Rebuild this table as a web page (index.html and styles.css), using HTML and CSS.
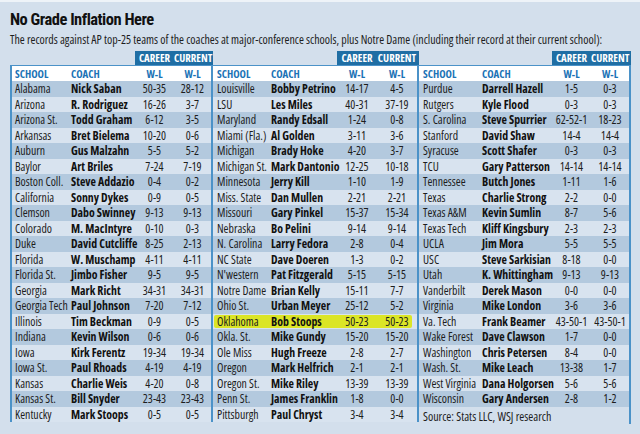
FILE: index.html
```html
<!DOCTYPE html>
<html lang="en">
<head>
<meta charset="utf-8">
<title>No Grade Inflation Here</title>
<link rel="stylesheet" href="styles.css">
</head>
<body>
<div class="page">
  <h1 class="title">No Grade Inflation Here</h1>
  <p class="sub">The records against AP top-25 teams of the coaches at major-conference schools, plus Notre Dame (including their record at their current school):</p>
  <div class="tables">
    <div class="panel p1">
      <div class="bar"><div class="hd"><span class="hc">CAREER</span><span class="hu">CURRENT</span></div></div>
      <div class="box">
        <div class="row head"><span class="s">SCHOOL</span><span class="c">COACH</span><span class="n">W-L</span><span class="n">W-L</span></div>
        <div class="rows">
          <div class="row"><span class="s">Alabama</span><span class="c">Nick Saban</span><span class="n">50-35</span><span class="n">28-12</span></div>
          <div class="row"><span class="s">Arizona</span><span class="c">R. Rodriguez</span><span class="n">16-26</span><span class="n">3-7</span></div>
          <div class="row"><span class="s">Arizona St.</span><span class="c">Todd Graham</span><span class="n">6-12</span><span class="n">3-5</span></div>
          <div class="row"><span class="s">Arkansas</span><span class="c">Bret Bielema</span><span class="n">10-20</span><span class="n">0-6</span></div>
          <div class="row"><span class="s">Auburn</span><span class="c">Gus Malzahn</span><span class="n">5-5</span><span class="n">5-2</span></div>
          <div class="row"><span class="s">Baylor</span><span class="c">Art Briles</span><span class="n">7-24</span><span class="n">7-19</span></div>
          <div class="row"><span class="s">Boston Coll.</span><span class="c">Steve Addazio</span><span class="n">0-4</span><span class="n">0-2</span></div>
          <div class="row"><span class="s">California</span><span class="c">Sonny Dykes</span><span class="n">0-9</span><span class="n">0-5</span></div>
          <div class="row"><span class="s">Clemson</span><span class="c">Dabo Swinney</span><span class="n">9-13</span><span class="n">9-13</span></div>
          <div class="row"><span class="s">Colorado</span><span class="c">M. MacIntyre</span><span class="n">0-10</span><span class="n">0-3</span></div>
          <div class="row"><span class="s">Duke</span><span class="c">David Cutcliffe</span><span class="n">8-25</span><span class="n">2-13</span></div>
          <div class="row"><span class="s">Florida</span><span class="c">W. Muschamp</span><span class="n">4-11</span><span class="n">4-11</span></div>
          <div class="row"><span class="s">Florida St.</span><span class="c">Jimbo Fisher</span><span class="n">9-5</span><span class="n">9-5</span></div>
          <div class="row"><span class="s">Georgia</span><span class="c">Mark Richt</span><span class="n">34-31</span><span class="n">34-31</span></div>
          <div class="row"><span class="s">Georgia Tech</span><span class="c">Paul Johnson</span><span class="n">7-20</span><span class="n">7-12</span></div>
          <div class="row"><span class="s">Illinois</span><span class="c">Tim Beckman</span><span class="n">0-9</span><span class="n">0-5</span></div>
          <div class="row"><span class="s">Indiana</span><span class="c">Kevin Wilson</span><span class="n">0-6</span><span class="n">0-6</span></div>
          <div class="row"><span class="s">Iowa</span><span class="c">Kirk Ferentz</span><span class="n">19-34</span><span class="n">19-34</span></div>
          <div class="row"><span class="s">Iowa St.</span><span class="c">Paul Rhoads</span><span class="n">4-19</span><span class="n">4-19</span></div>
          <div class="row"><span class="s">Kansas</span><span class="c">Charlie Weis</span><span class="n">4-20</span><span class="n">0-8</span></div>
          <div class="row"><span class="s">Kansas St.</span><span class="c">Bill Snyder</span><span class="n">23-43</span><span class="n">23-43</span></div>
          <div class="row"><span class="s">Kentucky</span><span class="c">Mark Stoops</span><span class="n">0-5</span><span class="n">0-5</span></div>
        </div>
      </div>
    </div>
    <div class="panel p2">
      <div class="bar"><div class="hd"><span class="hc">CAREER</span><span class="hu">CURRENT</span></div></div>
      <div class="box">
        <div class="row head"><span class="s">SCHOOL</span><span class="c">COACH</span><span class="n">W-L</span><span class="n">W-L</span></div>
        <div class="rows">
          <div class="row"><span class="s">Louisville</span><span class="c">Bobby Petrino</span><span class="n">14-17</span><span class="n">4-5</span></div>
          <div class="row"><span class="s">LSU</span><span class="c">Les Miles</span><span class="n">40-31</span><span class="n">37-19</span></div>
          <div class="row"><span class="s">Maryland</span><span class="c">Randy Edsall</span><span class="n">1-24</span><span class="n">0-8</span></div>
          <div class="row"><span class="s">Miami (Fla.)</span><span class="c">Al Golden</span><span class="n">3-11</span><span class="n">3-6</span></div>
          <div class="row"><span class="s">Michigan</span><span class="c">Brady Hoke</span><span class="n">4-20</span><span class="n">3-7</span></div>
          <div class="row"><span class="s">Michigan St.</span><span class="c">Mark Dantonio</span><span class="n">12-25</span><span class="n">10-18</span></div>
          <div class="row"><span class="s">Minnesota</span><span class="c">Jerry Kill</span><span class="n">1-10</span><span class="n">1-9</span></div>
          <div class="row"><span class="s">Miss. State</span><span class="c">Dan Mullen</span><span class="n">2-21</span><span class="n">2-21</span></div>
          <div class="row"><span class="s">Missouri</span><span class="c">Gary Pinkel</span><span class="n">15-37</span><span class="n">15-34</span></div>
          <div class="row"><span class="s">Nebraska</span><span class="c">Bo Pelini</span><span class="n">9-14</span><span class="n">9-14</span></div>
          <div class="row"><span class="s">N. Carolina</span><span class="c">Larry Fedora</span><span class="n">2-8</span><span class="n">0-4</span></div>
          <div class="row"><span class="s">NC State</span><span class="c">Dave Doeren</span><span class="n">1-3</span><span class="n">0-2</span></div>
          <div class="row"><span class="s">N'western</span><span class="c">Pat Fitzgerald</span><span class="n">5-15</span><span class="n">5-15</span></div>
          <div class="row"><span class="s">Notre Dame</span><span class="c">Brian Kelly</span><span class="n">15-11</span><span class="n">7-7</span></div>
          <div class="row"><span class="s">Ohio St.</span><span class="c">Urban Meyer</span><span class="n">25-12</span><span class="n">5-2</span></div>
          <div class="row hl"><span class="s">Oklahoma</span><span class="c">Bob Stoops</span><span class="n">50-23</span><span class="n">50-23</span></div>
          <div class="row"><span class="s">Okla. St.</span><span class="c">Mike Gundy</span><span class="n">15-20</span><span class="n">15-20</span></div>
          <div class="row"><span class="s">Ole Miss</span><span class="c">Hugh Freeze</span><span class="n">2-8</span><span class="n">2-7</span></div>
          <div class="row"><span class="s">Oregon</span><span class="c">Mark Helfrich</span><span class="n">2-1</span><span class="n">2-1</span></div>
          <div class="row"><span class="s">Oregon St.</span><span class="c">Mike Riley</span><span class="n">13-39</span><span class="n">13-39</span></div>
          <div class="row"><span class="s">Penn St.</span><span class="c">James Franklin</span><span class="n">1-8</span><span class="n">0-0</span></div>
          <div class="row"><span class="s">Pittsburgh</span><span class="c">Paul Chryst</span><span class="n">3-4</span><span class="n">3-4</span></div>
        </div>
      </div>
    </div>
    <div class="panel p3">
      <div class="bar"><div class="hd"><span class="hc">CAREER</span><span class="hu">CURRENT</span></div></div>
      <div class="box">
        <div class="row head"><span class="s">SCHOOL</span><span class="c">COACH</span><span class="n">W-L</span><span class="n">W-L</span></div>
        <div class="rows">
          <div class="row"><span class="s">Purdue</span><span class="c">Darrell Hazell</span><span class="n">1-5</span><span class="n">0-3</span></div>
          <div class="row"><span class="s">Rutgers</span><span class="c">Kyle Flood</span><span class="n">0-3</span><span class="n">0-3</span></div>
          <div class="row"><span class="s">S. Carolina</span><span class="c">Steve Spurrier</span><span class="n">62-52-1</span><span class="n">18-23</span></div>
          <div class="row"><span class="s">Stanford</span><span class="c">David Shaw</span><span class="n">14-4</span><span class="n">14-4</span></div>
          <div class="row"><span class="s">Syracuse</span><span class="c">Scott Shafer</span><span class="n">0-3</span><span class="n">0-3</span></div>
          <div class="row"><span class="s">TCU</span><span class="c">Gary Patterson</span><span class="n">14-14</span><span class="n">14-14</span></div>
          <div class="row"><span class="s">Tennessee</span><span class="c">Butch Jones</span><span class="n">1-11</span><span class="n">1-6</span></div>
          <div class="row"><span class="s">Texas</span><span class="c">Charlie Strong</span><span class="n">2-2</span><span class="n">0-0</span></div>
          <div class="row"><span class="s">Texas A&amp;M</span><span class="c">Kevin Sumlin</span><span class="n">8-7</span><span class="n">5-6</span></div>
          <div class="row"><span class="s">Texas Tech</span><span class="c">Kliff Kingsbury</span><span class="n">2-3</span><span class="n">2-3</span></div>
          <div class="row"><span class="s">UCLA</span><span class="c">Jim Mora</span><span class="n">5-5</span><span class="n">5-5</span></div>
          <div class="row"><span class="s">USC</span><span class="c">Steve Sarkisian</span><span class="n">8-18</span><span class="n">0-0</span></div>
          <div class="row"><span class="s">Utah</span><span class="c">K. Whittingham</span><span class="n">9-13</span><span class="n">9-13</span></div>
          <div class="row"><span class="s">Vanderbilt</span><span class="c">Derek Mason</span><span class="n">0-0</span><span class="n">0-0</span></div>
          <div class="row"><span class="s">Virginia</span><span class="c">Mike London</span><span class="n">3-6</span><span class="n">3-6</span></div>
          <div class="row"><span class="s">Va. Tech</span><span class="c">Frank Beamer</span><span class="n">43-50-1</span><span class="n">43-50-1</span></div>
          <div class="row"><span class="s">Wake Forest</span><span class="c">Dave Clawson</span><span class="n">1-7</span><span class="n">0-0</span></div>
          <div class="row"><span class="s">Washington</span><span class="c">Chris Petersen</span><span class="n">8-4</span><span class="n">0-0</span></div>
          <div class="row"><span class="s">Wash. St.</span><span class="c">Mike Leach</span><span class="n">13-38</span><span class="n">1-7</span></div>
          <div class="row"><span class="s">West Virginia</span><span class="c">Dana Holgorsen</span><span class="n">5-6</span><span class="n">5-6</span></div>
          <div class="row"><span class="s">Wisconsin</span><span class="c">Gary Andersen</span><span class="n">2-8</span><span class="n">1-2</span></div>
        </div>
        <p class="source">Source: Stats LLC, WSJ research</p>
      </div>
    </div>
  </div>
</div>
</body>
</html>
```
FILE: styles.css
```css
html, body {
  margin: 0;
  padding: 0;
}
body {
  background: #d3dfec;
  font-family: "Open Sans", "Roboto", sans-serif;
  font-stretch: 75%;
  color: #1d1d1d;
  width: 640px;
  height: 434px;
  overflow: hidden;
}
.page {
  border-top: 2px solid #eef3f8;
  padding: 8px 0 0 10px;
}
.title {
  margin: 0;
  font-family: "Roboto", "Open Sans", sans-serif;
  font-stretch: 75%;
  font-size: 16.5px;
  line-height: 20px;
  font-weight: 700;
  letter-spacing: -0.5px;
  color: #111;
}
.sub {
  margin: 3px 0 0;
  font-size: 11.9px;
  line-height: 13px;
  color: #1d1d1d;
  white-space: nowrap;
}
.tables {
  display: flex;
  margin-top: 5px;
}
.panel {
  display: flex;
  flex-direction: column;
}
.p1 { --a: 59px; --b: 64px; --c: 39px; --d: 37px; --pl: 3px; }
.p2 { --a: 58px; --b: 66px; --c: 40px; --d: 40px; --pl: 4px; }
.p3 { --a: 63px; --b: 70px; --c: 39px; --d: 38px; --pl: 4px; }
.bar {
  height: 14px;
  display: flex;
  justify-content: flex-end;
}
.hd {
  display: flex;
  background: #1f6ea4;
  color: #fff;
  font-weight: 700;
  font-size: 10.8px;
  line-height: 14px;
}
.hd .hc { width: var(--c); text-align: center; }
.hd .hu { width: calc(var(--d) + 2px); text-align: center; padding-right: 2px; box-sizing: border-box; }
.box {
  border-right: 2px solid #4b92c8;
}
.p1 .box {
  border-left: 2px solid #4b92c8;
}
.row {
  display: grid;
  grid-template-columns: var(--a) var(--b) var(--c) var(--d);
  height: 15.5px;
  line-height: 15.5px;
  font-size: 11.8px;
  white-space: nowrap;
  position: relative;
}
.row span { position: relative; }
.row .s { padding-left: var(--pl); }
.row .c { font-weight: 700; color: #111; }
.row .n { text-align: center; }
.head {
  background: #fff;
  border-top: 1px solid #4b92c8;
  height: 15px;
  line-height: 16px;
  font-size: 10.8px;
  font-weight: 700;
  color: #1b73b6;
}
.head .c { color: #1b73b6; }
.rows .row:nth-child(odd) { background: #b3c9de; }
.rows .row:nth-child(even) { background: #d8e3ef; }
.rows .hl::before {
  content: "";
  position: absolute;
  left: 1px;
  right: 5px;
  top: 1.5px;
  bottom: 1.5px;
  background: #dbe526;
  border-radius: 2px;
}
.source {
  margin: 0;
  height: 17px;
  line-height: 20px;
  font-size: 12px;
  padding-left: 4px;
  color: #1d1d1d;
}
```
